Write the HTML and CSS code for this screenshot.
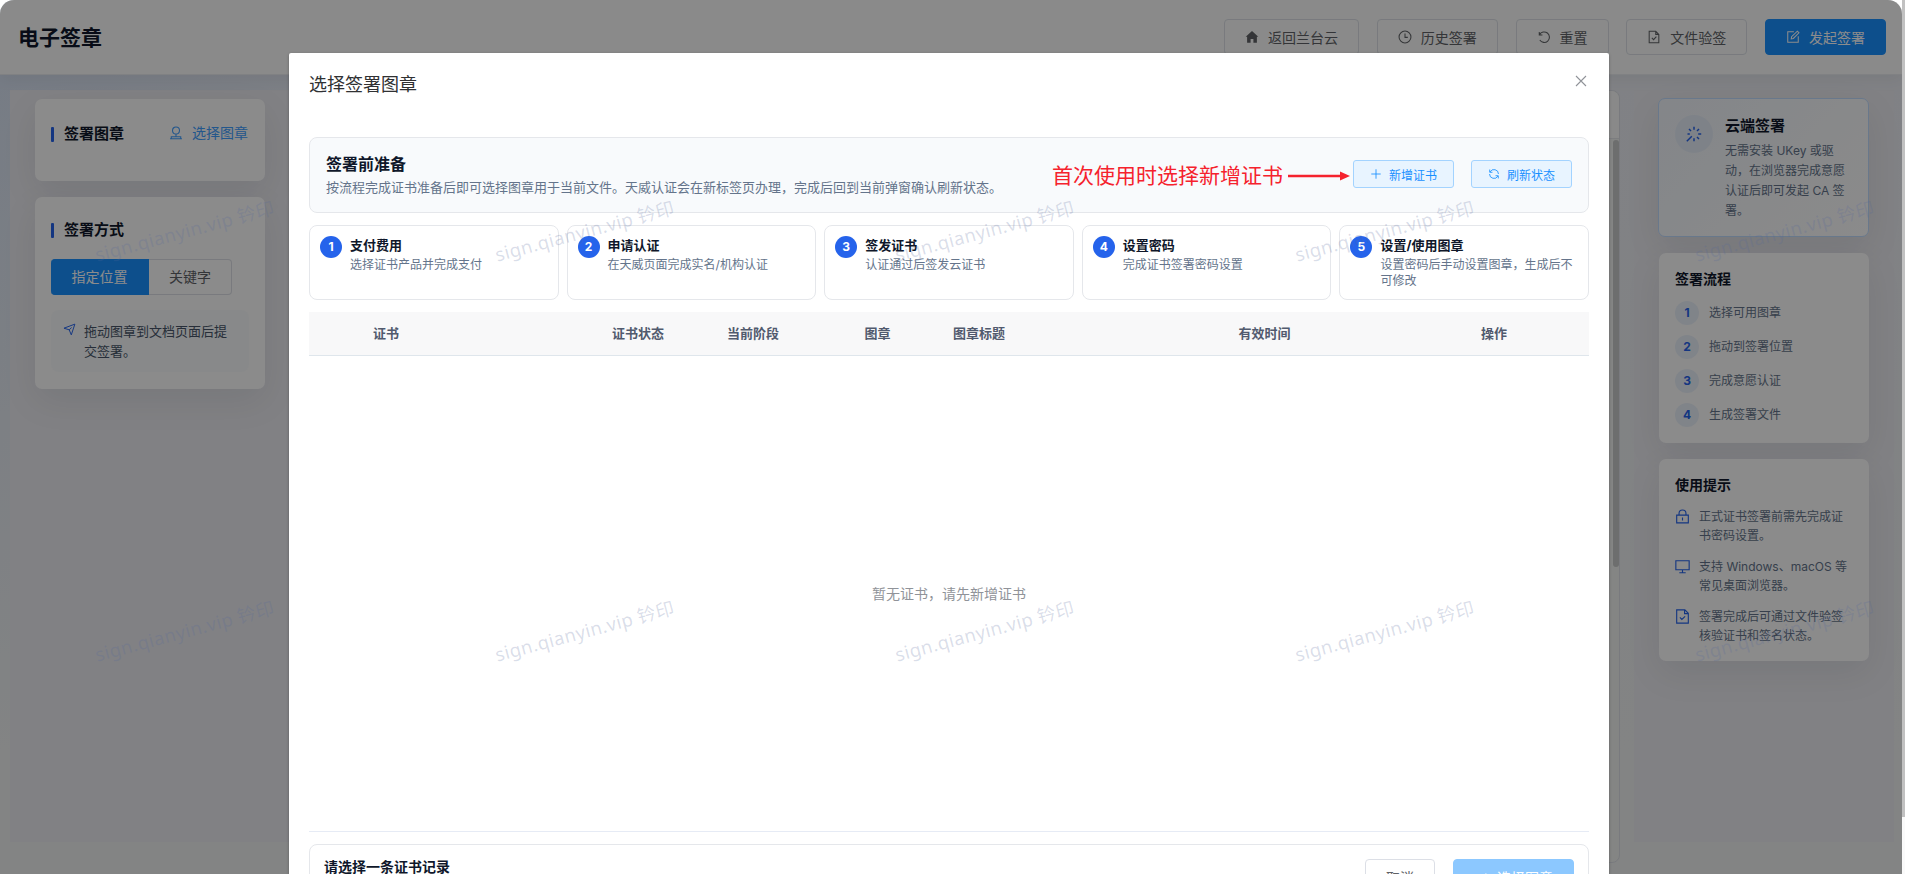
FILE: index.html
```
<!DOCTYPE html>
<html lang="zh-CN">
<head>
    <meta charset="UTF-8">
    <meta name="viewport" content="width=device-width, initial-scale=1.0">
    <title>电子签章</title>
    <link rel="stylesheet" href="styles.css">
</head>
<body>
    <div class="app">
        <header class="topbar">
            <h1>电子签章</h1>
            <div class="topbar-actions">
                <button class="btn">
                    <svg class="icon" viewBox="0 0 16 16"><path class="solid" d="M8 1.2.8 7.8h1.6v6.8h4v-4.2h3.2v4.2h4V7.8h1.6z"/></svg>
                    返回兰台云
                </button>
                <button class="btn">
                    <svg class="icon" viewBox="0 0 16 16"><circle cx="8" cy="8" r="6.8"/><path d="M8 4v4.4h3.2"/></svg>
                    历史签署
                </button>
                <button class="btn">
                    <svg class="icon" viewBox="0 0 16 16"><path d="M2.6 2.2v3.6h3.6M2.9 5.4A6 6 0 1 1 3.2 11.5"/></svg>
                    重置
                </button>
                <button class="btn">
                    <svg class="icon" viewBox="0 0 16 16"><path d="M2.5 1.5h7.5l3.5 3.5v9.5h-11zM10 1.5v3.5h3.5M5.5 9l2 2 3.2-3.4"/></svg>
                    文件验签
                </button>
                <button class="btn btn-primary">
                    <svg class="icon" viewBox="0 0 16 16"><path d="M9 2H2v12h12V7M6 10l.4-2.4L13 1.4l1.8 1.8-6.4 6.4z"/></svg>
                    发起签署
                </button>
            </div>
        </header>

        <div class="workspace">
            <aside class="side side-left">
                <section class="card seal-card">
                    <h2 class="bar-title">签署图章</h2>
                    <a class="seal-link">
                        <svg class="icon" viewBox="0 0 16 16"><circle cx="8" cy="5.2" r="4"/><path d="M8 9.2v2.4M2.6 14.6v-2.4h10.8v2.4M1.2 14.6h13.6"/></svg>
                        选择图章
                    </a>
                </section>
                <section class="card mode-card">
                    <h2 class="bar-title">签署方式</h2>
                    <div class="toggle">
                        <span class="on">指定位置</span>
                        <span>关键字</span>
                    </div>
                    <div class="tip">
                        <svg class="icon" viewBox="0 0 16 16"><path d="M1.2 6.4 14.6 1.4 10.2 14.6 7.6 8.4zM7.6 8.4l3-2.8"/></svg>
                        <p>拖动图章到文档页面后提交签署。</p>
                    </div>
                </section>
            </aside>

            <main class="viewer">
                <div class="viewer-head"></div>
                <div class="viewer-thumb"></div>
            </main>

            <aside class="side side-right">
                <section class="card cloud-card">
                    <span class="cloud-icon">
                        <svg class="icon" viewBox="0 0 16 16"><path d="M8 .8v3M8 12.2v3M12.2 8h3M1.5 8h2.3M11 5l2-2M11 11l2 2M3 3l2 2M5.8 10.2.8 15.2"/></svg>
                    </span>
                    <div>
                        <h2>云端签署</h2>
                        <p>无需安装 UKey 或驱动，在浏览器完成意愿认证后即可发起 CA 签署。</p>
                    </div>
                </section>
                <section class="card flow-card">
                    <h3>签署流程</h3>
                    <ol>
                        <li><b>1</b>选择可用图章</li>
                        <li><b>2</b>拖动到签署位置</li>
                        <li><b>3</b>完成意愿认证</li>
                        <li><b>4</b>生成签署文件</li>
                    </ol>
                </section>
                <section class="card hint-card">
                    <h3>使用提示</h3>
                    <ul>
                        <li>
                            <svg class="icon" viewBox="0 0 16 16"><path d="M1.8 6.5h12.4v8.3H1.8zM4.3 6.5V4.8a3.7 3.7 0 0 1 7.4 0v1.7M8 9v3.3"/></svg>
                            <span>正式证书签署前需先完成证书密码设置。</span>
                        </li>
                        <li>
                            <svg class="icon" viewBox="0 0 16 16"><path d="M.9 1.8h14.2v9.6H.9zM8 11.4v3M4.6 14.6h6.8"/></svg>
                            <span>支持 Windows、macOS 等常见桌面浏览器。</span>
                        </li>
                        <li>
                            <svg class="icon" viewBox="0 0 16 16"><path d="M1.8.9h8.7l3.7 3.7v10.5H1.8zM10.2.9v4h4M5.2 9l2.1 2.1 3.5-3.3"/></svg>
                            <span>签署完成后可通过文件验签核验证书和签名状态。</span>
                        </li>
                    </ul>
                </section>
            </aside>
        </div>

        <div class="mask"></div>
    </div>

    <div class="page-scroll"><i></i></div>

    <div class="dialog">
        <div class="dialog-head">
            <span>选择签署图章</span>
            <svg class="close" viewBox="0 0 12 12"><path d="M1 1l10 10M11 1 1 11"/></svg>
        </div>

        <div class="prepare">
            <div class="prepare-text">
                <h2>签署前准备</h2>
                <p>按流程完成证书准备后即可选择图章用于当前文件。天威认证会在新标签页办理，完成后回到当前弹窗确认刷新状态。</p>
            </div>
            <div class="note">
                首次使用时选择新增证书
                <svg viewBox="0 0 62 10"><path class="line" d="M0 5h54"/><path class="head" d="M52 .4 62 5l-10 4.6z"/></svg>
            </div>
            <button class="btn-mini">
                <svg class="icon" viewBox="0 0 14 14"><path d="M7 1.5v11M1.5 7h11"/></svg>
                新增证书
            </button>
            <button class="btn-mini">
                <svg class="icon" viewBox="0 0 14 14"><path d="M2 1.8v3.2h3.2M2.4 4.6A5.2 5.2 0 0 1 12.2 7M12 12.2V9H8.8M11.6 9.4A5.2 5.2 0 0 1 1.8 7"/></svg>
                刷新状态
            </button>
        </div>

        <div class="steps">
            <div class="step"><b>1</b><div><h4>支付费用</h4><p>选择证书产品并完成支付</p></div></div>
            <div class="step"><b>2</b><div><h4>申请认证</h4><p>在天威页面完成实名/机构认证</p></div></div>
            <div class="step"><b>3</b><div><h4>签发证书</h4><p>认证通过后签发云证书</p></div></div>
            <div class="step"><b>4</b><div><h4>设置密码</h4><p>完成证书签署密码设置</p></div></div>
            <div class="step"><b>5</b><div><h4>设置/使用图章</h4><p>设置密码后手动设置图章，生成后不可修改</p></div></div>
        </div>

        <div class="table-head">
            <span>证书</span>
            <span></span>
            <span>证书状态</span>
            <span>当前阶段</span>
            <span>图章</span>
            <span>图章标题</span>
            <span></span>
            <span>有效时间</span>
            <span>操作</span>
        </div>
        <div class="table-body">暂无证书，请先新增证书</div>

        <div class="dialog-foot">
            <strong>请选择一条证书记录</strong>
            <button class="btn">取消</button>
            <button class="btn btn-disabled">
                <svg class="icon" viewBox="0 0 16 16"><path d="M2 8.5l4 4 8-8.5"/></svg>
                选择图章
            </button>
        </div>
    </div>

    <!-- tiled watermark, 400px period -->
    <div class="watermark">
        <span>sign.qianyin.vip 钤印</span>
        <span>sign.qianyin.vip 钤印</span>
        <span>sign.qianyin.vip 钤印</span>
        <span>sign.qianyin.vip 钤印</span>
        <span>sign.qianyin.vip 钤印</span>
        <span>sign.qianyin.vip 钤印</span>
        <span>sign.qianyin.vip 钤印</span>
        <span>sign.qianyin.vip 钤印</span>
        <span>sign.qianyin.vip 钤印</span>
        <span>sign.qianyin.vip 钤印</span>
    </div>
</body>
</html>
```
FILE: styles.css
```
* {
    box-sizing: border-box;
}

html,
body {
    margin: 0;
    height: 100%;
    overflow: hidden;
}

body {
    position: relative;
    background: #fff;
    color: #0f172a;
    font-family: Inter, "Noto Sans CJK SC", sans-serif;
    font-size: 14px;
}

h1, h2, h3, h4, p, ul, ol {
    margin: 0;
    padding: 0;
    list-style: none;
}

button {
    font-family: inherit;
}

.icon {
    width: 14px;
    height: 14px;
    flex: none;
    fill: none;
    stroke: currentColor;
    stroke-width: 1.2;
}

.icon .solid {
    fill: currentColor;
    stroke: none;
}

/* page behind the dialog */
.app {
    position: relative;
    width: 1902px;
    height: 874px;
    border-radius: 14px 14px 0 0;
    overflow: hidden;
    background: linear-gradient(180deg, rgba(238, 240, 240, 0) 75px, #eef0f0 750px), linear-gradient(90deg, #d8e2f2, #eaecf2 25%);
}

.mask {
    position: absolute;
    inset: 0;
    background: rgba(0, 0, 0, 0.45);
}

.topbar {
    height: 75px;
    padding: 0 16px 0 18px;
    display: flex;
    align-items: center;
    justify-content: space-between;
    background: #fbfcfb;
    border-bottom: 1px solid #e9ebee;
    box-shadow: 0 4px 16px rgba(15, 23, 42, 0.06);
    position: relative;
}

.topbar h1 {
    padding-top: 1px;
    font-size: 21px;
    line-height: 28px;
}

.topbar-actions {
    display: flex;
    gap: 17.75px;
    padding-top: 1px;
    height: 38px;
}

.btn {
    height: 36px;
    padding: 0 20px;
    display: flex;
    align-items: center;
    gap: 9px;
    border: 1px solid #dcdfe6;
    border-radius: 4px;
    background: transparent;
    color: #606266;
    font-size: 14px;
    white-space: nowrap;
}

.btn-primary {
    background: #1890ff;
    border-color: #1890ff;
    color: #fff;
}

.workspace {
    display: flex;
    padding: 15px 8px 0 10px;
}

.side {
    height: 752px;
    background: #ebebf0;
    display: flex;
    flex-direction: column;
    gap: 16px;
}

.side-left {
    width: 279px;
    padding: 9px 24px 0 25px;
}

.side-right {
    width: 260px;
    padding: 8px 25px 0;
    margin-left: 14px;
}

.card {
    background: #fdfdfd;
    border-radius: 7px;
    box-shadow: 0 12px 36px rgba(15, 23, 42, 0.08);
}

.side-left .card {
    width: 230px;
}

.bar-title {
    display: flex;
    align-items: center;
    gap: 10px;
    font-size: 15px;
    line-height: 22px;
}

.bar-title::before {
    content: "";
    width: 3px;
    height: 15px;
    border-radius: 1px;
    background: #2563eb;
}

.seal-card {
    height: 82px;
    padding: 24px 17px 0 16px;
    display: flex;
    justify-content: space-between;
    align-items: flex-start;
}

.seal-link {
    display: flex;
    align-items: center;
    gap: 9px;
    line-height: 20px;
    color: #409eff;
}

.mode-card {
    height: 192px;
    padding: 22px 16px 0;
}

.toggle {
    display: flex;
    height: 36px;
    margin-top: 18px;
    line-height: 34px;
    color: #606266;
}

.toggle span {
    width: 83px;
    text-align: center;
    border: 1px solid #dcdfe6;
    border-left: 0;
    border-radius: 0 4px 4px 0;
}

.toggle .on {
    width: 98px;
    color: #fff;
    background: #1890ff;
    border-color: #1890ff;
    border-radius: 4px 0 0 4px;
}

.tip {
    height: 62px;
    margin-top: 15px;
    padding: 11px 14px 0 12px;
    display: flex;
    gap: 8px;
    border-radius: 8px;
    background: #f8fafc;
    color: #475569;
    font-size: 13px;
    line-height: 20px;
}

.tip .icon {
    width: 13px;
    height: 13px;
    margin-top: 2px;
    color: #2563eb;
}

.viewer {
    position: relative;
    flex: 1;
    height: 773px;
    border: 1px solid #dcdfe6;
    border-radius: 8px;
    background: #f1f3f1;
}

.viewer-head {
    height: 48px;
    border-bottom: 1px solid #e2e4e8;
    border-radius: 8px 8px 0 0;
    background: #fafafa;
}

.viewer-thumb {
    position: absolute;
    right: 0;
    top: 49px;
    width: 6px;
    height: 427px;
    border-radius: 3px;
    background: #c6c8c8;
}

.side-right .card {
    width: 210px;
}

.side-right h3 {
    font-size: 14px;
    line-height: 20px;
}

.cloud-card {
    height: 139px;
    padding: 16px 15px 0 16px;
    display: flex;
    gap: 12px;
    border: 1px solid #bfdbfe;
}

.side-right .cloud-card {
    width: 211px;
    margin-left: -1px;
    background: linear-gradient(135deg, #f0f4fa, #fdfdfd);
}

.cloud-icon {
    width: 38px;
    height: 38px;
    flex: none;
    display: flex;
    align-items: center;
    justify-content: center;
    border-radius: 50%;
    background: #e6edf8;
    color: #2563eb;
}

.cloud-icon .icon {
    width: 16px;
    height: 16px;
    stroke-width: 1.5;
}

.cloud-card h2 {
    font-size: 15px;
    line-height: 22px;
}

.cloud-card p {
    margin-top: 4px;
    font-size: 12px;
    line-height: 20px;
    color: #64748b;
}

.flow-card {
    height: 190px;
    padding: 16px;
}

.flow-card ol {
    margin-top: 12px;
    display: flex;
    flex-direction: column;
    gap: 10px;
}

.flow-card li {
    display: flex;
    align-items: center;
    gap: 10px;
    font-size: 12px;
    line-height: 24px;
    color: #64748b;
}

.flow-card b {
    width: 24px;
    height: 24px;
    border-radius: 50%;
    text-align: center;
    background: #eaf1fa;
    color: #2563eb;
}

.hint-card {
    height: 202px;
    padding: 16px;
}

.hint-card ul {
    margin-top: 12px;
    display: flex;
    flex-direction: column;
    gap: 12px;
}

.hint-card li {
    display: flex;
    gap: 9px;
    font-size: 12px;
    line-height: 19px;
    color: #64748b;
}

.hint-card .icon {
    width: 15px;
    height: 15px;
    margin-top: 2px;
    color: #2563eb;
}

.page-scroll {
    position: absolute;
    top: 0;
    left: 1902px;
    width: 3px;
    height: 874px;
    background: #fafafa;
}

.page-scroll i {
    display: block;
    height: 817px;
    background: #c1c1c1;
}

/* dialog */
.dialog {
    position: absolute;
    top: 53px;
    bottom: 0;
    left: 289px;
    width: 1320px;
    padding: 0 20px;
    overflow: hidden;
    background: #fff;
    border-radius: 2px 2px 0 0;
    box-shadow: 0 1px 3px rgba(0, 0, 0, 0.3);
}

.dialog-head {
    height: 84px;
    padding: 20px 2px 0 0;
    display: flex;
    justify-content: space-between;
    font-size: 18px;
    line-height: 24px;
    color: #303133;
}

.close {
    width: 12px;
    height: 12px;
    margin-top: 2px;
    stroke: #909399;
    stroke-width: 1.1;
}

.prepare {
    height: 76px;
    padding: 0 16px 2px 16px;
    display: flex;
    align-items: center;
    border: 1px solid #e5e7eb;
    border-radius: 8px;
    background: #f8fafc;
}

.prepare-text {
    flex: 1;
}

.prepare h2 {
    font-size: 16px;
    line-height: 24px;
}

.prepare p {
    margin-top: 1px;
    font-size: 13px;
    line-height: 20px;
    color: #64748b;
}

.note {
    display: flex;
    align-items: center;
    gap: 5px;
    margin-right: 3px;
    padding-top: 4px;
    font-size: 21px;
    line-height: 30px;
    color: #f5222d;
}

.note svg {
    width: 62px;
    height: 10px;
}

.note .line {
    stroke: #f5222d;
    stroke-width: 2.4;
}

.note .head {
    fill: #f5222d;
}

.btn-mini {
    width: 101px;
    height: 28px;
    padding: 0;
    display: flex;
    align-items: center;
    justify-content: center;
    gap: 7px;
    border: 1px solid #a3d3ff;
    border-radius: 3px;
    background: #e8f4ff;
    color: #1890ff;
    font-size: 12px;
}

.btn-mini + .btn-mini {
    margin-left: 17px;
}

.btn-mini .icon {
    width: 12px;
    height: 12px;
    stroke-width: 1;
}

.steps {
    margin-top: 12px;
    display: grid;
    grid-template-columns: repeat(5, 1fr);
    gap: 8px;
}

.step {
    height: 75px;
    padding: 10px;
    display: flex;
    gap: 8px;
    border: 1px solid #e5e7eb;
    border-radius: 8px;
}

.step b {
    width: 22px;
    height: 22px;
    flex: none;
    border-radius: 50%;
    background: #2563eb;
    color: #fff;
    font-size: 12px;
    line-height: 22px;
    text-align: center;
}

.step h4 {
    font-size: 13px;
    line-height: 18px;
}

.step p {
    margin-top: 3px;
    font-size: 12px;
    line-height: 16px;
    color: #64748b;
}

.table-head {
    height: 44px;
    margin-top: 12px;
    padding-bottom: 2px;
    display: grid;
    grid-template-columns: 154px 113px 124px 106px 143px 60px 121px 269px 190px;
    align-items: center;
    text-align: center;
    background: #f8f8f9;
    border-bottom: 1px solid #dfe6ec;
    color: #515a6e;
    font-size: 13px;
    font-weight: bold;
}

.table-body {
    height: 476px;
    padding-bottom: 2px;
    display: flex;
    align-items: center;
    justify-content: center;
    border-bottom: 1px solid #e6ebf5;
    color: #909399;
}

.dialog-foot {
    height: 66px;
    margin-top: 12px;
    padding: 14px 14px 0;
    display: flex;
    gap: 18px;
    border: 1px solid #e5e7eb;
    border-radius: 8px;
}

.dialog-foot strong {
    flex: 1;
    line-height: 16px;
}

.btn-disabled {
    background: #8cc8ff;
    border-color: #8cc8ff;
    color: #fff;
}

/* watermark */
.watermark {
    position: absolute;
    top: 0;
    left: 0;
    width: 100%;
    height: 100%;
    overflow: hidden;
    display: grid;
    grid-template-columns: repeat(5, 400px);
    grid-template-rows: repeat(2, 400px);
    pointer-events: none;
}

.watermark span {
    padding-top: 60px;
    place-self: center;
    width: 190px;
    height: 84px;
    line-height: 24px;
    color: rgba(85, 105, 155, 0.22);
    font-family: "Noto Sans", "Noto Sans CJK SC", sans-serif;
    font-size: 18.5px;
    letter-spacing: 0.4px;
    text-align: center;
    white-space: nowrap;
    transform: translate(-23px, 2px) rotate(-15deg);
}
```
